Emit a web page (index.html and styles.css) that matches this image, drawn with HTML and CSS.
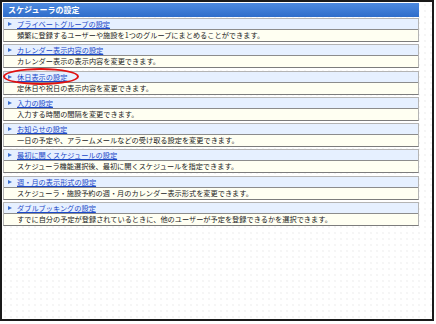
FILE: index.html
```html
<!DOCTYPE html>
<html lang="ja">
<head>
    <meta charset="UTF-8">
    <title>スケジューラの設定</title>
    <link rel="stylesheet" href="styles.css">
</head>
<body>
<div class="frame">
    <div class="panel">
        <div class="panel-head">スケジューラの設定</div>
        <div class="list">
            <div class="item">
                <div class="item-title"><span class="arrow"></span><a href="#">プライベートグループの設定</a></div>
                <div class="item-desc">頻繁に登録するユーザーや施設を1つのグループにまとめることができます。</div>
            </div>
            <div class="item">
                <div class="item-title"><span class="arrow"></span><a href="#">カレンダー表示内容の設定</a></div>
                <div class="item-desc">カレンダー表示の表示内容を変更できます。</div>
            </div>
            <div class="item">
                <div class="item-title marked"><span class="arrow"></span><a href="#">休日表示の設定</a><span class="circle"></span></div>
                <div class="item-desc">定休日や祝日の表示内容を変更できます。</div>
            </div>
            <div class="item">
                <div class="item-title"><span class="arrow"></span><a href="#">入力の設定</a></div>
                <div class="item-desc">入力する時間の間隔を変更できます。</div>
            </div>
            <div class="item">
                <div class="item-title"><span class="arrow"></span><a href="#">お知らせの設定</a></div>
                <div class="item-desc">一日の予定や、アラームメールなどの受け取る設定を変更できます。</div>
            </div>
            <div class="item">
                <div class="item-title"><span class="arrow"></span><a href="#">最初に開くスケジュールの設定</a></div>
                <div class="item-desc">スケジューラ機能選択後、最初に開くスケジュールを指定できます。</div>
            </div>
            <div class="item">
                <div class="item-title"><span class="arrow"></span><a href="#">週・月の表示形式の設定</a></div>
                <div class="item-desc">スケジューラ・施設予約の週・月のカレンダー表示形式を変更できます。</div>
            </div>
            <div class="item">
                <div class="item-title"><span class="arrow"></span><a href="#">ダブルブッキングの設定</a></div>
                <div class="item-desc">すでに自分の予定が登録されているときに、他のユーザーが予定を登録できるかを選択できます。</div>
            </div>
        </div>
    </div>
</div>
</body>
</html>
```

FILE: styles.css
```css
body {
    margin: 0;
    font-family: "Noto Sans CJK JP", "Noto Sans", sans-serif;
    background: #fff;
}
.frame {
    box-sizing: border-box;
    width: 434px;
    height: 321px;
    border: 2px solid #1a1a1a;
    box-shadow: 0 2px 0 #b8b8b8;
    padding: 1px;
    background-color: #fff;
    background-image: radial-gradient(#f5f5f5 0.7px, transparent 0.8px);
    background-size: 6px 6px;
}
.panel {
    width: 416px;
}
.panel-head {
    height: 14px;
    line-height: 14px;
    padding-left: 5px;
    background: linear-gradient(#4d8ae0, #2f6dca);
    color: #fff;
    font-size: 8px;
    font-weight: bold;
}
.list {
    display: flex;
    flex-direction: column;
    gap: 2.3px;
    margin-top: 1px;
}
.item {
    border: 1px solid #b4b4b4;
    border-bottom-color: #7c7c7c;
}
.item-title {
    position: relative;
    display: flex;
    align-items: center;
    height: 10px;
    padding-left: 4px;
    background: #e6f0ff;
    border-bottom: 1px solid #8c8c8c;
    font-size: 7.2px;
    line-height: 10px;
}
.arrow {
    width: 0;
    height: 0;
    border-left: 4px solid #3b6fcf;
    border-top: 2.5px solid transparent;
    border-bottom: 2.5px solid transparent;
    margin-right: 5px;
}
.item-title a {
    color: #1a48c8;
    text-decoration: underline;
}
.item-desc {
    height: 11px;
    line-height: 11px;
    padding-left: 13px;
    background: #fffff2;
    color: #222;
    font-size: 7.2px;
}
.circle {
    position: absolute;
    left: -1px;
    top: -4px;
    width: 72px;
    height: 13px;
    border: 2px solid #e01010;
    border-radius: 50%;
}
```
